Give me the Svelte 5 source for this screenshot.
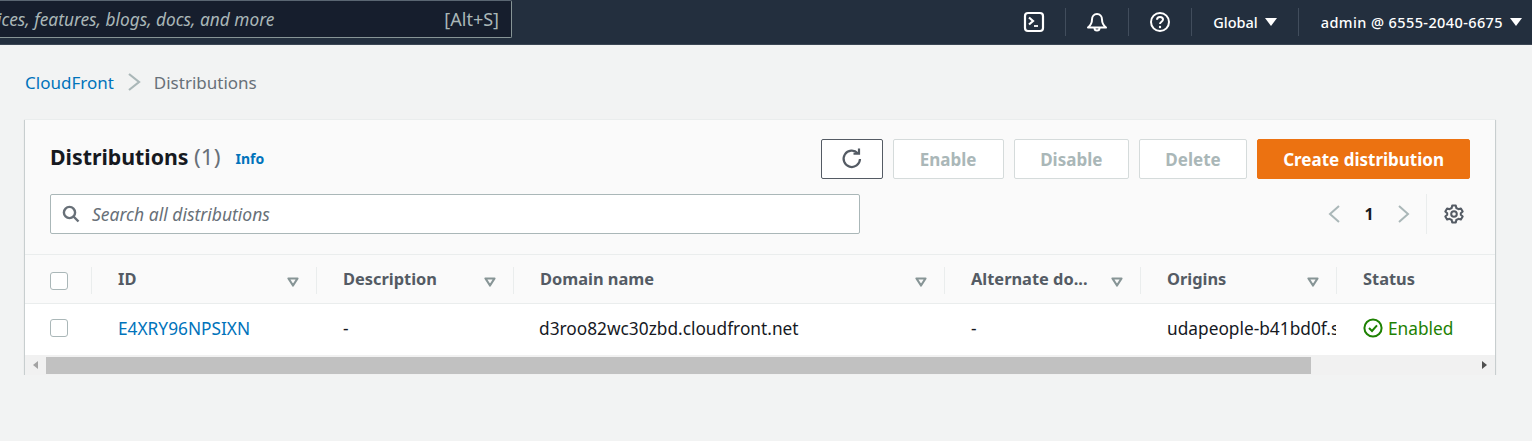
<script>
  const columns = [
    { label: 'ID', sort: true },
    { label: 'Description', sort: true },
    { label: 'Domain name', sort: true },
    { label: 'Alternate do...', sort: true },
    { label: 'Origins', sort: true },
    { label: 'Status', sort: false }
  ];
  const actions = ['Enable', 'Disable', 'Delete'];
</script>

<header class="topbar">
  <div class="global-search">
    <span class="global-text">Search for services, features, blogs, docs, and more</span>
    <span class="shortcut">[Alt+S]</span>
  </div>
  <nav class="nav">
    <span class="nav-item icon-item">
      <svg width="22" height="22" viewBox="0 0 22 22" fill="none" stroke="#fff" stroke-width="2.2"><rect x="2" y="2" width="18" height="18" rx="3"/><path d="M6 6.5 L10 10 L6 13.5"/><path d="M11 15 H15" stroke-width="1.8"/></svg>
    </span>
    <span class="nav-item icon-item">
      <svg width="22" height="22" viewBox="0 0 22 22" fill="none" stroke="#fff" stroke-width="2" stroke-linejoin="round"><path d="M2 16.5 C5 14 6 12 6 8.5 C6 5.5 8 3 11 3 C14 3 16 5.5 16 8.5 C16 12 17 14 20 16.5 Z"/><path d="M8.5 17 a2.5 2.5 0 0 0 5 0"/></svg>
    </span>
    <span class="nav-item icon-item">
      <svg width="22" height="22" viewBox="0 0 22 22" fill="none" stroke="#fff" stroke-width="2"><circle cx="11" cy="11" r="9"/><path d="M8 8.8 C8 6.8 9.5 6 11 6 C12.8 6 14 7 14 8.6 C14 10.8 11 10.8 11 13"/><circle cx="11" cy="16" r="1.2" fill="#fff" stroke="none"/></svg>
    </span>
    <span class="nav-item text-item region">Global <i class="caret"></i></span>
    <span class="nav-item text-item account"><span class="account-name">admin @ 6555-2040-6675</span> <i class="caret"></i></span>
  </nav>
</header>

<main class="page">
  <div class="breadcrumb">
    <a class="crumb-link" href="#top">CloudFront</a>
    <svg width="14" height="20" viewBox="0 0 14 20" fill="none" stroke="#aab7b8" stroke-width="2.2"><path d="M2 2 L12 10 L2 18"/></svg>
    <span class="crumb-current">Distributions</span>
  </div>

  <section class="card">
    <div class="card-header">
      <div class="title-row">
        <h1 class="title">Distributions <span class="count">(1)</span></h1>
        <a class="info" href="#top">Info</a>
        <div class="actions">
          <button class="btn refresh" aria-label="Refresh">
            <svg width="22" height="22" viewBox="0 0 22 22" fill="none" stroke="#545b64" stroke-width="2.2"><path d="M16.8 5.2 A8.2 8.2 0 1 0 19 11"/><path d="M12.5 5.6 H18 V0.5" /></svg>
          </button>
          {#each actions as action}
            <button class="btn disabled">{action}</button>
          {/each}
          <button class="btn primary">Create distribution</button>
        </div>
      </div>
      <div class="filter-row">
        <div class="search">
          <svg width="18" height="18" viewBox="0 0 18 18" fill="none" stroke="#687078" stroke-width="2.4"><circle cx="7.5" cy="7.5" r="5.6"/><path d="M11.5 11.5 L16.5 16.5"/></svg>
          <span class="placeholder">Search all distributions</span>
        </div>
        <div class="pager">
          <svg width="14" height="20" viewBox="0 0 14 20" fill="none" stroke="#aab7b8" stroke-width="2"><path d="M12 2 L3 10 L12 18"/></svg>
          <span class="page-num">1</span>
          <svg width="14" height="20" viewBox="0 0 14 20" fill="none" stroke="#aab7b8" stroke-width="2"><path d="M2 2 L11 10 L2 18"/></svg>
          <span class="settings">
            <svg width="20" height="20" viewBox="0 0 20 20" fill="none" stroke="#545b64" stroke-width="2" stroke-linejoin="round"><path d="M8.2 1.5 H11.8 L12.3 4 L14.5 5.2 L16.9 4.4 L18.7 7.5 L16.8 9.2 V10.8 L18.7 12.5 L16.9 15.6 L14.5 14.8 L12.3 16 L11.8 18.5 H8.2 L7.7 16 L5.5 14.8 L3.1 15.6 L1.3 12.5 L3.2 10.8 V9.2 L1.3 7.5 L3.1 4.4 L5.5 5.2 L7.7 4 Z"/><circle cx="10" cy="10" r="2.8"/></svg>
          </span>
        </div>
      </div>
    </div>

    <div class="row head">
      <div class="cell check-cell"><span class="check"></span></div>
      {#each columns as col}
        <div class="cell head-cell">
          <span>{col.label}</span>
          {#if col.sort}
            <svg class="sort" width="12" height="10" viewBox="0 0 12 10" fill="none" stroke="#879596" stroke-width="2.2" stroke-linejoin="round"><path d="M1.5 1.5 H10.5 L6 8.5 Z"/></svg>
          {/if}
        </div>
      {/each}
    </div>

    <div class="row body">
      <div class="cell check-cell"><span class="check"></span></div>
      <div class="cell"><a class="id-link" href="#top">E4XRY96NPSIXN</a></div>
      <div class="cell">-</div>
      <div class="cell domain">d3roo82wc30zbd.cloudfront.net</div>
      <div class="cell">-</div>
      <div class="cell clip">udapeople-b41bd0f.s3.amazonaws.com</div>
      <div class="cell enabled">
        <svg width="20" height="20" viewBox="0 0 20 20" fill="none" stroke="#1d8102" stroke-width="2"><circle cx="10" cy="10" r="8.6"/><path d="M6 10 L9 13 L14 7.4"/></svg>
        Enabled
      </div>
    </div>

    <div class="scrollbar">
      <i class="arrow left"></i>
      <div class="track"><div class="thumb"></div></div>
      <i class="arrow right"></i>
    </div>
  </section>
</main>

<style>
  :global(body) {
    margin: 0;
    background: #f2f3f3;
    font-family: "Noto Sans", sans-serif;
    font-size: 17.3px;
    color: #16191f;
    overflow: hidden;
  }

  a {
    color: #0073bb;
    text-decoration: none;
  }

  .topbar {
    display: flex;
    justify-content: space-between;
    height: 44px;
    background: #232f3e;
    border-bottom: 1px solid #3b4654;
    color: #fff;
  }

  .global-search {
    box-sizing: border-box;
    display: flex;
    justify-content: flex-end;
    align-items: center;
    width: 512px;
    height: 38px;
    padding-right: 12px;
    background: #161e2d;
    border: 1px solid #879596;
    border-top-color: #5a6672;
    border-left: none;
    border-radius: 0 2px 2px 0;
    overflow: hidden;
    white-space: nowrap;
    color: #aab7b8;
    font-size: 17.3px;
  }

  .global-text {
    flex-shrink: 0;
    font-style: italic;
    margin-right: 170px;
  }

  .shortcut {
    flex-shrink: 0;
    font-size: 18px;
  }

  .nav {
    display: flex;
    align-items: center;
    height: 44px;
  }

  .nav-item {
    display: flex;
    align-items: center;
    height: 28px;
    border-left: 1px solid #414d5c;
  }

  .icon-item {
    justify-content: center;
    width: 62px;
  }

  .icon-item:first-child {
    border-left: none;
  }

  .text-item {
    font-size: 14.5px;
    font-weight: 500;
    gap: 7px;
    white-space: nowrap;
  }

  .region {
    padding: 0 21px;
  }

  .account {
    padding: 0 10px 0 22px;
  }

  .account-name {
    letter-spacing: 0.4px;
  }

  .caret {
    width: 0;
    height: 0;
    border-left: 6px solid transparent;
    border-right: 6px solid transparent;
    border-top: 8px solid #fff;
  }

  .page {
    padding: 0 37px 0 25px;
  }

  .breadcrumb {
    display: flex;
    align-items: center;
    gap: 13px;
    height: 74px;
    font-size: 17px;
  }

  .crumb-current {
    color: #687078;
  }

  .card {
    background: #fff;
    box-shadow: 0 1px 1px 0 rgba(0, 28, 36, 0.45), 1px 1px 1px 0 rgba(0, 28, 36, 0.1), -1px 1px 1px 0 rgba(0, 28, 36, 0.1);
    border-top: 1px solid #eaeded;
  }

  .card-header {
    box-sizing: border-box;
    height: 135px;
    padding: 19px 25px 0;
    background: #fafafa;
    border-bottom: 1px solid #eaeded;
  }

  .title-row {
    display: flex;
    align-items: center;
    height: 40px;
  }

  .title {
    margin: 0 0 4px;
    font-size: 21.3px;
    font-weight: 700;
    line-height: 1;
  }

  .count {
    font-weight: 400;
    font-size: 22.5px;
    color: #687078;
  }

  .info {
    margin: 0 0 1px 15px;
    font-size: 14px;
    font-weight: 700;
  }

  .actions {
    display: flex;
    gap: 10px;
    margin-left: auto;
  }

  .btn {
    box-sizing: border-box;
    height: 40px;
    padding: 0 25.5px;
    border-radius: 2px;
    background: #fff;
    font-family: inherit;
    font-size: 17px;
    font-weight: 700;
  }

  .refresh {
    display: flex;
    align-items: center;
    justify-content: center;
    width: 62px;
    padding: 0;
    border: 1px solid #545b64;
  }

  .disabled {
    border: 1px solid #d5dbdb;
    color: #aab7b8;
  }

  .disabled:nth-child(2) {
    min-width: 111px;
  }

  .primary {
    padding: 0 25px;
    border: 1px solid #ec7211;
    background: #ec7211;
    color: #fff;
  }

  .filter-row {
    display: flex;
    justify-content: space-between;
    align-items: center;
    margin-top: 15px;
  }

  .search {
    box-sizing: border-box;
    display: flex;
    align-items: center;
    gap: 12px;
    width: 810px;
    height: 40px;
    padding-left: 11px;
    background: #fff;
    border: 1px solid #aab7b8;
    border-radius: 2px;
  }

  .placeholder {
    color: #687078;
    font-size: 17.5px;
    font-style: italic;
  }

  .pager {
    display: flex;
    align-items: center;
    height: 40px;
    padding-right: 6px;
  }

  .page-num {
    width: 56px;
    text-align: center;
    font-weight: 700;
    font-size: 16px;
  }

  .settings {
    display: flex;
    align-items: center;
    height: 40px;
    margin-left: 15px;
    padding-left: 17px;
    border-left: 1px solid #eaeded;
  }

  .row {
    display: grid;
    grid-template-columns: 66px 225px 197px 431px 196px 196px 1fr;
  }

  .head {
    box-sizing: border-box;
    height: 49px;
    background: #fafafa;
    border-bottom: 1px solid #eaeded;
  }

  .body {
    box-sizing: border-box;
    height: 51px;
    padding-bottom: 3px;
    background: #fff;
    align-items: center;
  }

  .cell {
    box-sizing: border-box;
    display: flex;
    align-items: center;
    padding: 0 25px 0 27px;
    min-width: 0;
    white-space: nowrap;
  }

  .domain {
    padding-left: 26px;
  }

  .check-cell {
    padding: 0 0 0 25px;
  }

  .head .cell {
    margin: 12px 0;
    border-left: 1px solid #eaeded;
    font-size: 16.4px;
    font-weight: 700;
    color: #545b64;
  }

  .head .check-cell {
    border-left: none;
  }

  .head-cell {
    justify-content: space-between;
    padding-left: 26px;
    padding-right: 17px;
  }

  .head-cell span {
    margin-bottom: 4px;
  }

  .sort {
    margin-top: 2px;
  }

  .check {
    box-sizing: border-box;
    width: 18px;
    height: 18px;
    background: #fff;
    border: 1px solid #aab7b8;
    border-radius: 3px;
  }

  .clip {
    overflow: hidden;
    padding-right: 0;
    display: block;
  }

  .enabled {
    gap: 5px;
    color: #1d8102;
  }

  .scrollbar {
    display: flex;
    align-items: center;
    height: 20px;
    background: #f1f1f1;
  }

  .track {
    flex: 1;
  }

  .thumb {
    width: 1265px;
    height: 17px;
    background: #c1c1c1;
  }

  .arrow {
    width: 0;
    height: 0;
    border-top: 4.5px solid transparent;
    border-bottom: 4.5px solid transparent;
  }

  .left {
    margin-left: 8px;
    margin-right: 8px;
    border-right: 5px solid #a3a3a3;
  }

  .right {
    margin-left: 8px;
    margin-right: 8px;
    border-left: 5px solid #505050;
  }
</style>
